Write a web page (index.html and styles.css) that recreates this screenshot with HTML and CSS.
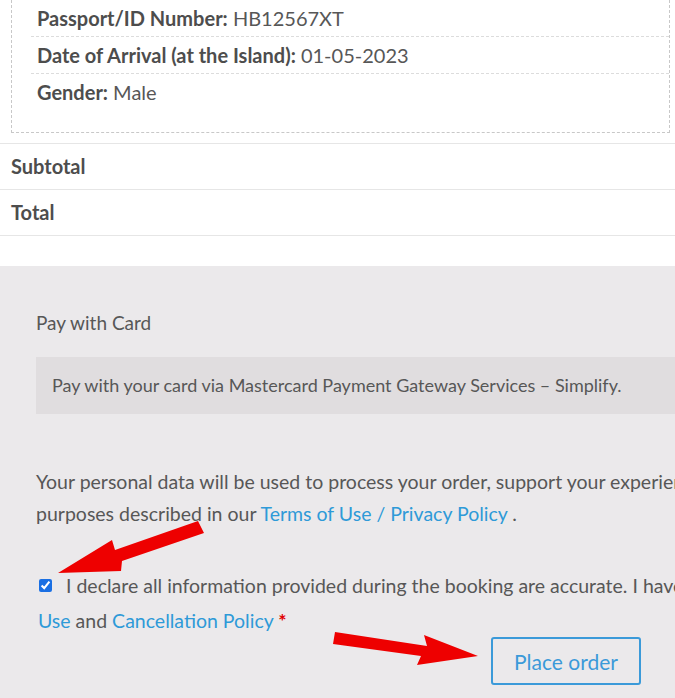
FILE: index.html
```html
<!DOCTYPE html>
<html>
<head>
<meta charset="utf-8">
<link rel="stylesheet" href="styles.css">
</head>
<body>
<div class="page">
  <section class="order">
    <div class="details">
      <ul class="meta">
        <li><strong>Passport/ID Number:</strong> HB12567XT</li>
        <li><strong>Date of Arrival (at the Island):</strong> 01-05-2023</li>
        <li class="last"><strong>Gender:</strong> Male</li>
      </ul>
    </div>
    <div class="totals">
      <div class="trow"><strong>Subtotal</strong></div>
      <div class="trow"><strong>Total</strong></div>
    </div>
  </section>
  <section class="payment">
    <div class="method">Pay with Card</div>
    <div class="method-box">Pay with your card via Mastercard Payment Gateway Services – Simplify.</div>
    <p class="privacy">Your personal data will be used to process your order, support your experience throughout this website, and for other<br>purposes described in our <a href="#">Terms of Use / Privacy Policy</a> .</p>
    <label class="declare"><input type="checkbox" checked> <span>I declare all information provided during the booking are accurate. I have read and agree to the <a href="#">Terms of</a></span></label>
    <div class="declare2"><a href="#">Use</a> and <a href="#">Cancellation Policy</a> <span class="req">*</span></div>
    <div class="actions"><button class="place">Place order</button></div>
  </section>
  <svg class="arrows" width="675" height="698" viewBox="0 0 675 698">
    <polygon fill="#ee0000" points="58,573 112,540 115,550 198,521 204,533 122,561 121,571"/>
    <polygon fill="#ee0000" points="335,632 427,646 424,635 478,656 417,665 421,656 333,644"/>
  </svg>
</div>
</body>
</html>
```
FILE: styles.css
```css
html, body {
  margin: 0;
  padding: 0;
}
body {
  width: 675px;
  height: 698px;
  overflow: hidden;
  font-family: Lato, "Liberation Sans", sans-serif;
  font-size: 19px;
  color: #575757;
  background: #fff;
}
.page {
  position: relative;
  width: 675px;
  height: 698px;
  overflow: hidden;
}
.order {
  background: #fff;
  height: 266px;
  font-size: 20px;
}
.details {
  margin-left: 11px;
  width: 659px;
  height: 133px;
  box-sizing: border-box;
  border: 1px dashed #c8c8c8;
  border-top: none;
}
.meta {
  list-style: none;
  margin: 0;
  padding: 0 0 0 19px;
}
.meta li {
  height: 36px;
  line-height: 36px;
  padding-left: 6px;
  border-bottom: 1px dashed #dcdcdc;
  white-space: nowrap;
}
.meta li.last {
  border-bottom: none;
}
.meta strong, .trow strong {
  color: #4d4d4d;
  font-weight: 700;
}
.totals {
  margin-top: 10px;
  border-top: 1px solid #e6e6e6;
}
.trow {
  height: 45px;
  line-height: 44px;
  padding-left: 11px;
  border-bottom: 1px solid #e6e6e6;
}
.payment {
  background: #ebe9eb;
  height: 432px;
  padding: 40px 0 0 36px;
  box-sizing: border-box;
  white-space: nowrap;
}
.method {
  line-height: 34px;
}
.method-box {
  margin-top: 17px;
  background: #e0dddf;
  height: 57px;
  line-height: 57px;
  padding-left: 16px;
  width: 1000px;
  font-size: 18px;
}
.privacy {
  margin: 52px 0 0;
  line-height: 32px;
  font-size: 19.5px;
}
a {
  color: #2e9ad8;
  text-decoration: none;
}
.declare {
  display: flex;
  align-items: center;
  margin-top: 37px;
  height: 36px;
  font-size: 19.5px;
}
.declare input {
  margin: 0 0 0 3px;
  width: 13px;
  height: 13px;
  accent-color: #1a6fe3;
}
.declare span {
  margin-left: 14px;
}
.declare2 {
  line-height: 36px;
  padding-left: 2px;
  font-size: 19.5px;
}
.req {
  color: #e00000;
  font-weight: 700;
}
.actions {
  padding-left: 455px;
  margin-top: -2px;
}
.place {
  width: 150px;
  height: 48px;
  background: transparent;
  border: 2px solid #3b9ad9;
  border-radius: 3px;
  color: #3b9ad9;
  font-family: Lato, "Liberation Sans", sans-serif;
  font-size: 21px;
  padding: 0;
}
.arrows {
  position: absolute;
  left: 0;
  top: 0;
  pointer-events: none;
}
```
